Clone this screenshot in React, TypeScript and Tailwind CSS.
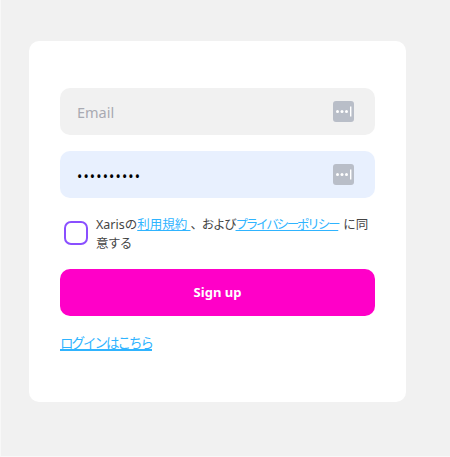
const fontStack = '[font-family:"Noto_Sans","Noto_Sans_CJK_JP",sans-serif]';

function KeyIcon() {
  return (
    <svg width="21" height="21" viewBox="0 0 21 21" className="shrink-0">
      <rect width="21" height="21" rx="3" fill="#b9bec8" />
      <circle cx="4.5" cy="10.5" r="1.5" fill="#fff" />
      <circle cx="9" cy="10.5" r="1.5" fill="#fff" />
      <circle cx="13.5" cy="10.5" r="1.5" fill="#fff" />
      <rect x="17" y="5.5" width="1.4" height="10" fill="#fff" />
    </svg>
  );
}

export default function App() {
  return (
    <div className={`h-[457px] w-[450px] overflow-hidden border-b border-l border-[#f8f8f8] bg-[#f1f1f1] pl-[28px] pt-[41px] ${fontStack}`}>
      <div className="h-[361px] w-[377px] rounded-[10px] bg-white px-[31px] pt-[47px]">
        {/* Email */}
        <div className="flex h-[47px] w-[315px] items-center rounded-[10px] bg-[#f1f1f1] pl-[17px] pr-[21px]">
          <input
            type="text"
            placeholder="Email"
            className="w-full bg-transparent pt-[2px] text-[14.5px] text-black outline-none placeholder:text-[#a9aab2]"
          />
          <KeyIcon />
        </div>

        {/* Password */}
        <div className="mt-4 flex h-[47px] w-[315px] items-center rounded-[10px] bg-[#e8f0fe] pl-[17px] pr-[21px]">
          <input
            type="password"
            defaultValue="1234567890"
            className="w-full bg-transparent pt-[3px] text-[14px] tracking-[1.15px] text-black outline-none"
          />
          <KeyIcon />
        </div>

        {/* Terms */}
        <div className="mt-[14px] flex items-start pl-1">
          <div className="mt-[9px] h-6 w-6 shrink-0 rounded-[7px] border-2 border-[#8a4fff] bg-white" />
          <p className="ml-2 w-[277px] whitespace-nowrap pt-[3px] text-[12.5px] leading-[19px] text-[#444444]">
            Xarisの
            <a href="#" className="text-[#2fb4ff] underline">利用規約 </a>
            <span className="tracking-[-1.25px]">、および</span>
            <a href="#" className="tracking-[-2.2px] text-[#2fb4ff] underline">プライバシーポリシー</a>
            <span className="ml-[5px]">に同</span>
            <br />
            <span className="tracking-[-0.6px]">意する</span>
          </p>
        </div>

        {/* Submit */}
        <button className="mt-4 flex h-[47px] w-[315px] items-center justify-center rounded-[10px] bg-[#ff00c8] pt-[1px] text-[13px] font-bold text-white">
          Sign up
        </button>

        <div className="mt-[14px]">
          <a href="#" className="text-[13.5px] leading-[22px] tracking-[-2px] text-[#2fb4ff] underline decoration-[1.5px]">ログインはこちら</a>
        </div>
      </div>
    </div>
  );
}
